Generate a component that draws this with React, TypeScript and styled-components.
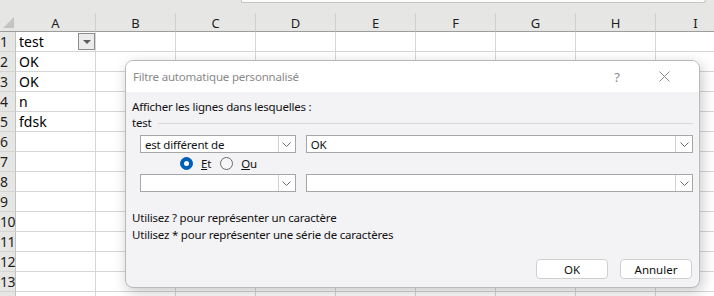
import styled, { createGlobalStyle } from "styled-components";

const GlobalStyle = createGlobalStyle`
  html, body {
    margin: 0;
    padding: 0;
    background: #ffffff;
    overflow: hidden;
  }
  * {
    box-sizing: border-box;
  }
`;

const COLS = ["A", "B", "C", "D", "E", "F", "G", "H", "I"];
const ROWS = 14;
const values: Record<number, string> = { 1: "test", 2: "OK", 3: "OK", 4: "n", 5: "fdsk" };

const Screen = styled.div`
  position: relative;
  width: 714px;
  height: 296px;
  overflow: hidden;
  background: #ffffff;
  font-family: "Noto Sans", "Open Sans", sans-serif;
`;

const TopBar = styled.div`
  height: 13px;
  background: #e6e6e4;
  display: flex;
  flex-direction: column;
`;

const FormulaStrip = styled.div`
  height: 3px;
  margin-left: 241px;
  margin-right: 8px;
  background: #fbfbfb;
  border-left: 1px solid #c6c6c6;
  border-bottom: 1px solid #c6c6c6;
  border-right: 1px solid #c6c6c6;
  border-bottom-right-radius: 3px;
`;

const Grid = styled.div`
  display: grid;
  grid-template-columns: 16px repeat(9, 80px);
  grid-template-rows: 19px repeat(${ROWS}, 20px);
`;

const Corner = styled.div`
  position: relative;
  background: #e6e6e4;
  border-bottom: 1px solid #9c9c9c;
  &::after {
    content: "";
    position: absolute;
    right: 2px;
    bottom: 3px;
    border-style: solid;
    border-width: 0 0 11px 11px;
    border-color: transparent transparent #c4c4c4 transparent;
  }
`;

const ColHead = styled.div`
  background: #e6e6e4;
  border-right: 1px solid #cfcfcd;
  border-bottom: 1px solid #9c9c9c;
  display: flex;
  align-items: center;
  justify-content: center;
  font-size: 13px;
  color: #1e1e1e;
  padding-top: 2px;
`;

const RowHead = styled.div`
  background: #e6e6e4;
  border-bottom: 1px solid #d4d4d2;
  border-right: 1px solid #c2c2c0;
  font-size: 14px;
  line-height: 19px;
  color: #1e1e1e;
  white-space: nowrap;
  letter-spacing: -0.5px;
`;

const Cell = styled.div`
  position: relative;
  border-right: 1px solid #d6d6d6;
  border-bottom: 1px solid #d6d6d6;
  font-size: 14px;
  line-height: 19px;
  padding-left: 3px;
  color: #000;
  white-space: nowrap;
`;

const FilterButton = styled.div`
  position: absolute;
  right: 0px;
  top: 1px;
  width: 17px;
  height: 17px;
  border: 1px solid #8c8c8c;
  background: #ebebeb;
  display: flex;
  align-items: center;
  justify-content: center;
  &::after {
    content: "";
    border-style: solid;
    border-width: 4px 4px 0 4px;
    border-color: #5c5c5c transparent transparent transparent;
  }
`;

const Dialog = styled.div`
  position: absolute;
  left: 125px;
  top: 60px;
  width: 575px;
  height: 228px;
  background: #f3f2f5;
  border: 1px solid #b9b9b9;
  border-radius: 8px;
  box-shadow: 2px 4px 14px rgba(0, 0, 0, 0.22);
  overflow: hidden;
  display: flex;
  flex-direction: column;
  font-family: "Noto Sans", "Open Sans", sans-serif;
  font-size: 11.5px;
  letter-spacing: -0.2px;
  color: #111;
`;

const TitleBar = styled.div`
  height: 31px;
  background: #ffffff;
  display: flex;
  align-items: center;
  padding-left: 7px;
  flex-shrink: 0;
`;

const Title = styled.div`
  flex: 1;
  color: #8a8a8a;
`;

const TitleIcon = styled.div<{ $w: number }>`
  width: ${(p) => p.$w}px;
  display: flex;
  justify-content: center;
  align-items: center;
  color: #8a8a8a;
  font-size: 13px;
`;

const Body = styled.div`
  flex: 1;
  display: flex;
  flex-direction: column;
  padding: 7px 6px 8px 6px;
`;

const Line = styled.div`
  height: 16px;
  line-height: 16px;
  white-space: nowrap;
`;

const Legend = styled.div`
  display: flex;
  align-items: center;
  height: 16px;
  line-height: 16px;
  gap: 6px;
  &::after {
    content: "";
    flex: 1;
    height: 1px;
    background: #d8d8d8;
  }
`;

const CriteriaRow = styled.div<{ $top: number }>`
  display: flex;
  gap: 10px;
  margin-top: ${(p) => p.$top}px;
  padding-left: 8px;
`;

const Combo = styled.div<{ $w: number }>`
  width: ${(p) => p.$w}px;
  height: 18px;
  background: #ffffff;
  border: 1px solid #a6a6a6;
  display: flex;
  align-items: center;
`;

const ComboText = styled.div`
  flex: 1;
  padding-left: 4px;
  white-space: nowrap;
`;

const ComboButton = styled.div`
  width: 17px;
  height: 16px;
  border-left: 1px solid #d0d0d0;
  display: flex;
  align-items: center;
  justify-content: center;
  background: #ffffff;
`;

const RadioRow = styled.div`
  display: flex;
  align-items: center;
  height: 21px;
  padding-left: 48px;
  gap: 4px;
`;

const RadioItem = styled.label`
  display: flex;
  align-items: center;
  gap: 8px;
  margin-right: 5px;
`;

const RadioDot = styled.span<{ $on: boolean }>`
  width: 13px;
  height: 13px;
  border-radius: 50%;
  display: inline-flex;
  align-items: center;
  justify-content: center;
  background: ${(p) => (p.$on ? "#005fb8" : "#f6f6f6")};
  border: 1px solid ${(p) => (p.$on ? "#005fb8" : "#6a6a6a")};
  &::after {
    content: "";
    width: 5px;
    height: 5px;
    border-radius: 50%;
    background: ${(p) => (p.$on ? "#ffffff" : "transparent")};
  }
`;

const Help = styled.div`
  margin-top: 17px;
  display: flex;
  flex-direction: column;
`;

const HelpLine = styled.div`
  height: 17px;
  line-height: 17px;
  white-space: nowrap;
`;

const Footer = styled.div`
  margin-top: auto;
  display: flex;
  justify-content: flex-end;
  gap: 12px;
  padding-right: 1px;
`;

const Button = styled.button`
  width: 72px;
  height: 20px;
  background: #ffffff;
  border: 1px solid #cfcfcf;
  border-radius: 4px;
  font-family: "Noto Sans", "Open Sans", sans-serif;
  font-size: 11.5px;
  color: #111;
  padding: 0;
`;

function Chevron() {
  return (
    <svg width="9" height="5" viewBox="0 0 9 5">
      <path d="M0.5 0.5 L4.5 4.5 L8.5 0.5" fill="none" stroke="#6a6a6a" strokeWidth="1" />
    </svg>
  );
}

function CloseIcon() {
  return (
    <svg width="11" height="11" viewBox="0 0 11 11">
      <path d="M0.5 0.5 L10.5 10.5 M10.5 0.5 L0.5 10.5" stroke="#8a8a8a" strokeWidth="1" />
    </svg>
  );
}

function Sheet() {
  const cells = [];
  cells.push(<Corner key="corner" />);
  COLS.forEach((c) => cells.push(<ColHead key={c}>{c}</ColHead>));
  for (let r = 1; r <= ROWS; r++) {
    // the last row only peeks in at the bottom edge, its number is out of view
    cells.push(<RowHead key={`h${r}`}>{r < ROWS ? r : null}</RowHead>);
    COLS.forEach((c, i) => {
      cells.push(
        <Cell key={`${c}${r}`}>
          {i === 0 ? values[r] : null}
          {i === 0 && r === 1 ? <FilterButton /> : null}
        </Cell>
      );
    });
  }
  return <Grid>{cells}</Grid>;
}

export default function App() {
  return (
    <>
      <GlobalStyle />
      <Screen>
        <TopBar>
          <FormulaStrip />
        </TopBar>
        <Sheet />
        <Dialog>
          <TitleBar>
            <Title>Filtre automatique personnalisé</Title>
            <TitleIcon $w={24}>?</TitleIcon>
            <TitleIcon $w={70}>
              <CloseIcon />
            </TitleIcon>
          </TitleBar>
          <Body>
            <Line>Afficher les lignes dans lesquelles :</Line>
            <Legend>test</Legend>
            <CriteriaRow $top={4}>
              <Combo $w={156}>
                <ComboText>est différent de</ComboText>
                <ComboButton>
                  <Chevron />
                </ComboButton>
              </Combo>
              <Combo $w={388}>
                <ComboText>OK</ComboText>
                <ComboButton>
                  <Chevron />
                </ComboButton>
              </Combo>
            </CriteriaRow>
            <RadioRow>
              <RadioItem>
                <RadioDot $on />
                <span>
                  <u>E</u>t
                </span>
              </RadioItem>
              <RadioItem>
                <RadioDot $on={false} />
                <span>
                  <u>O</u>u
                </span>
              </RadioItem>
            </RadioRow>
            <CriteriaRow $top={0}>
              <Combo $w={156}>
                <ComboText />
                <ComboButton>
                  <Chevron />
                </ComboButton>
              </Combo>
              <Combo $w={388}>
                <ComboText />
                <ComboButton>
                  <Chevron />
                </ComboButton>
              </Combo>
            </CriteriaRow>
            <Help>
              <HelpLine>Utilisez ? pour représenter un caractère</HelpLine>
              <HelpLine>Utilisez * pour représenter une série de caractères</HelpLine>
            </Help>
            <Footer>
              <Button>OK</Button>
              <Button>Annuler</Button>
            </Footer>
          </Body>
        </Dialog>
      </Screen>
    </>
  );
}
